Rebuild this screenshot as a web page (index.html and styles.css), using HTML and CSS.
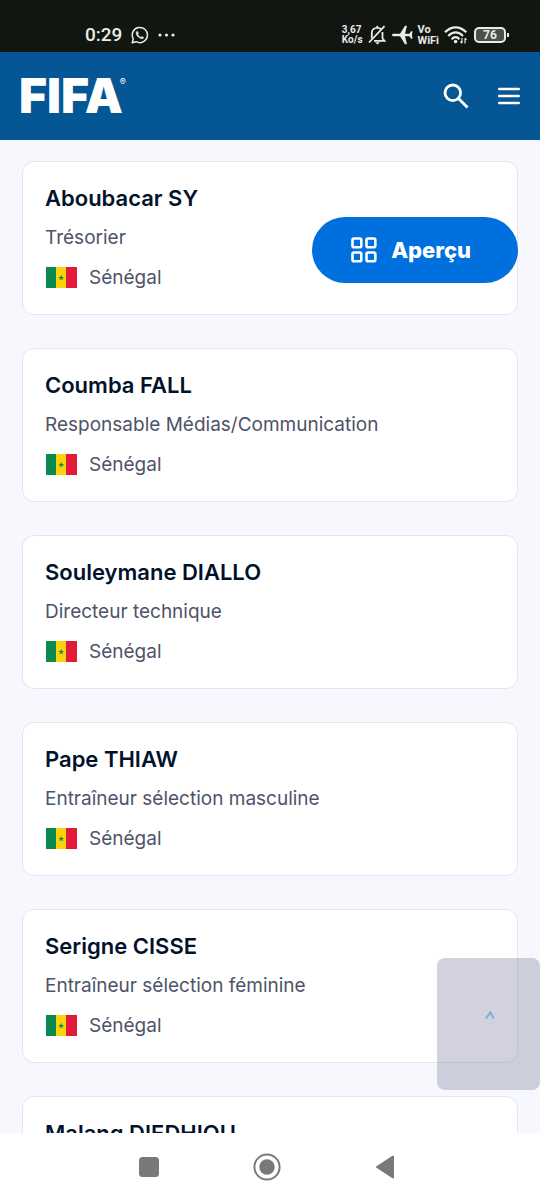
FILE: index.html
```html
<!DOCTYPE html>
<html lang="fr">

<head>
    <meta charset="UTF-8" />
    <meta name="viewport" content="width=device-width, initial-scale=1.0">
    <title>FIFA</title>
    <link rel="stylesheet" href="styles.css">
</head>

<body>

    <div class="status-bar">
        <div class="status-left">
            <span class="clock">0:29</span>
            <svg class="icon" width="18" height="18" viewBox="0 0 18 18" fill="none" stroke="#e8ebe6" stroke-width="1.5">
                <path d="M1.2 16.8 2.3 12.9A7.6 7.6 0 1 1 5.2 15.7Z" stroke-linejoin="round" />
                <path d="M6.2 4.9C4.2 6.6 5.3 9 7.1 10.8S11.5 13.7 13 11.7L10.9 10.4 9.9 11.3C8.6 10.7 7.4 9.5 6.9 8.2L7.5 7.2Z" fill="#e8ebe6" stroke-width="0.4" />
            </svg>
            <svg class="icon" width="17" height="4" viewBox="0 0 17 4" fill="#e8ebe6">
                <circle cx="2" cy="2" r="1.6" />
                <circle cx="8.5" cy="2" r="1.6" />
                <circle cx="15" cy="2" r="1.6" />
            </svg>
        </div>
        <div class="status-right">
            <span class="stacked">3,67<br>Ko/s</span>
            <svg class="icon" width="19" height="20" viewBox="0 0 19 20" fill="none" stroke="#e8ebe6" stroke-width="1.8">
                <path d="M14.5 7V13.5L16.5 15.8H6M3.8 13.5V8C3.8 4.5 6 2.8 9.3 2.8 11 2.8 12.3 3.3 13.2 4.3M9.3 2.8V.8" />
                <path d="M1 17.5 16.5 1.2" />
                <path d="M7 17.3H12L9.5 19.5Z" fill="#e8ebe6" stroke="none" />
            </svg>
            <svg class="icon" width="21" height="20" viewBox="0 0 21 20" fill="#e8ebe6">
                <path d="M0 10C0 9 1 8.7 2 8.7H8L13 .8H15L13 8.7H17.5L19 6.3H20.5L20 10 20.5 13.7H19L17.5 11.3H13L15 19.2H13L8 11.3H2C1 11.3 0 11 0 10Z" />
            </svg>
            <span class="stacked wide">Vo<br>WiFi</span>
            <svg class="icon" width="24" height="18" viewBox="0 0 24 18" fill="none" stroke="#e8ebe6" stroke-width="2.2">
                <path d="M1 6.3C7.2-.4 16-.4 22.3 6.3" />
                <path d="M4.3 9.9C8.7 5.2 14.5 5.2 19 9.9" />
                <path d="M7.6 13.2C10 10.5 13.2 10.5 15.5 13.2" />
                <circle cx="11.6" cy="15.6" r="1.8" fill="#e8ebe6" stroke="none" />
                <path d="M18 12V17M16.5 15.5 18 17.3M21 17.5V12.5M22.5 14 21 12" stroke-width="1.2" />
            </svg>
            <div class="battery">76</div>
        </div>
    </div>

    <header class="header">
        <a href="#" class="logo">FIFA<sup>®</sup></a>
        <div class="header-actions">
            <button aria-label="Rechercher">
                <svg width="26" height="26" viewBox="0 0 26 26" fill="none" stroke="#fff" stroke-width="2.8">
                    <circle cx="9.8" cy="9.8" r="7.8" />
                    <path d="M15.5 15.5 24.5 24.5" />
                </svg>
            </button>
            <button aria-label="Menu">
                <svg width="24" height="18" viewBox="0 0 24 18" stroke="#fff" stroke-width="2.6" stroke-linecap="round">
                    <path d="M2.3 2H21.7M2.3 9H21.7M2.3 16H21.7" />
                </svg>
            </button>
        </div>
    </header>

    <div class="content">
        <main class="cards" id="cards"></main>

        <button class="overview">
            <svg width="26" height="26" viewBox="0 0 26 26" fill="none" stroke="#fff" stroke-width="2.6">
                <rect x="1.5" y="1.5" width="8.8" height="8.8" rx="1.5" />
                <rect x="15.5" y="1.5" width="8.8" height="8.8" rx="1.5" />
                <rect x="1.5" y="15.5" width="8.8" height="8.8" rx="1.5" />
                <rect x="15.5" y="15.5" width="8.8" height="8.8" rx="1.5" />
            </svg>
            Aperçu
        </button>

        <button class="scroll-top" id="scroll-top" aria-label="Haut de page">
            <svg width="10" height="8" viewBox="0 0 10 8" fill="none" stroke="#73a9d2" stroke-width="1.7">
                <path d="M1 7.5 5.5 1.2 8.5 7.5" />
            </svg>
        </button>
    </div>

    <nav class="nav-bar">
        <button aria-label="Applications récentes">
            <svg width="20" height="20" viewBox="0 0 20 20" fill="#797979">
                <rect width="20" height="20" rx="3.5" />
            </svg>
        </button>
        <button aria-label="Accueil">
            <svg width="28" height="28" viewBox="0 0 28 28">
                <circle cx="14" cy="14" r="12.6" fill="none" stroke="#797979" stroke-width="2" />
                <circle cx="14" cy="14" r="7.7" fill="#797979" />
            </svg>
        </button>
        <button aria-label="Retour">
            <svg width="20" height="24" viewBox="0 0 20 24" fill="#797979" stroke="#797979" stroke-width="2" stroke-linejoin="round">
                <path d="M2 12 18 1.5V22.5Z" />
            </svg>
        </button>
    </nav>

    <script>
        const membres = [
            { nom: "Aboubacar SY", poste: "Trésorier" },
            { nom: "Coumba FALL", poste: "Responsable Médias/Communication" },
            { nom: "Souleymane DIALLO", poste: "Directeur technique" },
            { nom: "Pape THIAW", poste: "Entraîneur sélection masculine" },
            { nom: "Serigne CISSE", poste: "Entraîneur sélection féminine" },
            { nom: "Malang DIEDHIOU" }
        ];

        const drapeau = `
            <svg width="32" height="22" viewBox="0 0 32 22">
                <rect x="1" width="10" height="21" fill="#0b8a50" />
                <rect x="11" width="11" height="21" fill="#fcd30b" />
                <rect x="21" width="11" height="21" fill="#e31b3b" />
                <path d="M16.2 7.7 17 9.9H19.2L17.4 11.2 18.1 13.5 16.2 12.1 14.3 13.5 15 11.2 13.2 9.9H15.4Z" fill="#0b8a50" />
            </svg>`;

        const cards = document.getElementById("cards");

        membres.forEach(membre => {
            const details = membre.poste
                ? `<p>${membre.poste}</p><p class="country">${drapeau}Sénégal</p>`
                : "";

            cards.innerHTML += `
                <article class="card">
                    <h2>${membre.nom}</h2>
                    ${details}
                </article>`;
        });

        document.getElementById("scroll-top").addEventListener("click", function () {
            cards.scrollTop = 0;
        });
    </script>
</body>

</html>
```
FILE: styles.css
```css
* {
    box-sizing: border-box;
}

body {
    margin: 0;
    height: 100vh;
    display: flex;
    flex-direction: column;
    font-family: Inter, "Liberation Sans", sans-serif;
    background-color: #f7f8fd;
}

button {
    display: flex;
    align-items: center;
    justify-content: center;
    padding: 0;
    border: none;
    background: none;
    font-family: inherit;
    cursor: pointer;
}

svg {
    display: block;
    flex-shrink: 0;
}

/* Barre d'état */
.status-bar {
    display: flex;
    justify-content: space-between;
    height: 52px;
    padding: 18px 34px 0 85px;
    background-color: #111611;
    color: #e8ebe6;
    font-family: Roboto, sans-serif;
}

.status-left,
.status-right {
    display: flex;
    align-items: center;
}

.status-left {
    gap: 9px;
}

.status-right {
    gap: 5px;
}

.clock {
    font-size: 19px;
    line-height: 24px;
    font-weight: 500;
}

.stacked {
    font-size: 10px;
    line-height: 10px;
    font-weight: 700;
}

.stacked.wide {
    font-size: 11px;
    line-height: 11px;
}

.battery {
    width: 32px;
    height: 16px;
    margin-left: 1px;
    border: 2px solid #e8ebe6;
    border-radius: 5px;
    background-color: #4c504c;
    text-align: center;
    font-size: 12px;
    line-height: 12px;
    font-weight: 700;
    position: relative;
}

.battery::after {
    content: "";
    position: absolute;
    top: 4px;
    right: -5px;
    width: 2px;
    height: 4px;
    background-color: #e8ebe6;
}

/* En-tête */
.header {
    display: flex;
    justify-content: space-between;
    align-items: center;
    height: 88px;
    padding: 0 19px;
    background-color: #045694;
}

.logo {
    position: relative;
    color: #fff;
    font-size: 48px;
    line-height: 48px;
    font-weight: 900;
    text-decoration: none;
}

.logo sup {
    position: absolute;
    top: 0;
    right: -3px;
    font-size: 9px;
    line-height: 20px;
    font-weight: 400;
}

.header-actions {
    display: flex;
    gap: 28px;
}

/* Liste */
.content {
    flex: 1;
    min-height: 0;
    position: relative;
}

.cards {
    display: flex;
    flex-direction: column;
    gap: 33px;
    height: 100%;
    padding: 21px 22px 0;
    overflow-y: auto;
    scrollbar-width: none;
}

.card {
    display: flex;
    flex-direction: column;
    flex-shrink: 0;
    gap: 10px;
    padding: 21px 22px;
    border: 1px solid #e4e5f0;
    border-radius: 12px;
    background-color: #fff;
}

.card h2 {
    margin: 0;
    color: #03122b;
    font-size: 22px;
    line-height: 30px;
    font-weight: 600;
}

.card p {
    margin: 0;
    color: #4e5368;
    font-size: 19px;
    line-height: 30px;
}

.card .country {
    display: flex;
    align-items: center;
    gap: 12px;
}

.overview {
    position: absolute;
    top: 77px;
    right: 22px;
    gap: 14px;
    height: 66px;
    padding: 0 47px 0 39px;
    border-radius: 33px;
    background-color: #0070df;
    color: #fff;
    font-size: 22px;
    font-weight: 800;
}

.scroll-top {
    position: absolute;
    right: 0;
    bottom: 43px;
    width: 103px;
    height: 132px;
    padding: 0 0 18px 3px;
    border-radius: 8px;
    background-color: rgba(149, 151, 176, 0.43);
}

/* Navigation Android */
.nav-bar {
    display: flex;
    justify-content: center;
    height: 66px;
    padding: 2px 6px 0 0;
    background-color: #fff;
}

.nav-bar button {
    width: 118px;
}
```
